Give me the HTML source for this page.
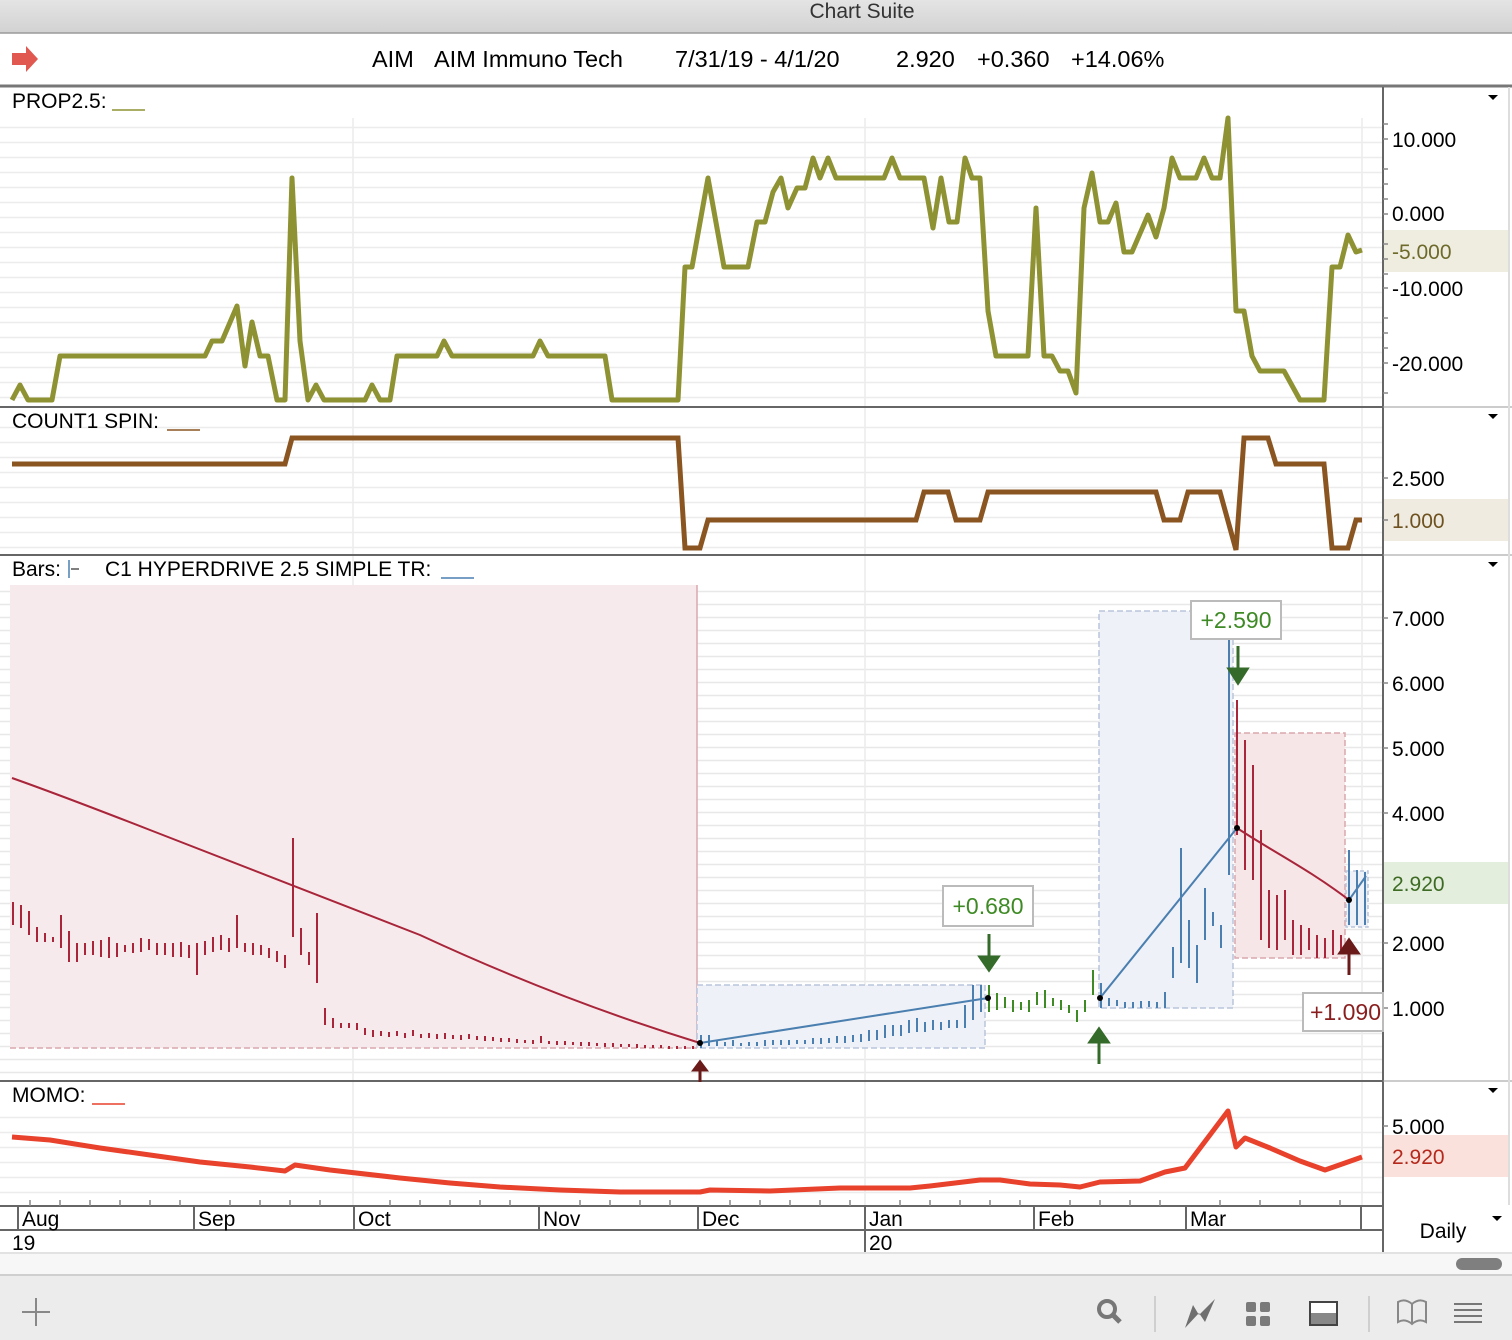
<!DOCTYPE html>
<html><head><meta charset="utf-8"><style>
body{margin:0;width:1512px;height:1340px;overflow:hidden;background:#fff;font-family:"Liberation Sans",sans-serif;}
svg{position:absolute;left:0;top:0}
text{font-family:"Liberation Sans",sans-serif}
</style></head><body>
<svg width="1512" height="1340" viewBox="0 0 1512 1340">
<defs>
<pattern id="hg" width="1512" height="15" patternUnits="userSpaceOnUse"><line x1="0" y1="7.5" x2="1512" y2="7.5" stroke="#ececec" stroke-width="1.5"/></pattern>
<pattern id="hg2" width="1512" height="13" patternUnits="userSpaceOnUse"><line x1="0" y1="6.5" x2="1512" y2="6.5" stroke="#e8e8e8" stroke-width="1.5"/></pattern>
<linearGradient id="tb" x1="0" y1="0" x2="0" y2="1"><stop offset="0" stop-color="#e4e4e4"/><stop offset="1" stop-color="#d2d2d2"/></linearGradient>
</defs>
<rect x="0" y="0" width="1512" height="33" fill="url(#tb)"/>
<line x1="0" y1="33" x2="1512" y2="33" stroke="#9a9a9a" stroke-width="1.5"/>
<text x="862" y="18" font-size="21" text-anchor="middle" fill="#333">Chart Suite</text>
<path d="M12 53 H26 V46 L38 59 L26 72 V65 H12 Z" fill="#e0584f"/>
<text y="67" font-size="23.5" fill="#000"><tspan x="372">AIM</tspan><tspan x="434">AIM Immuno Tech</tspan><tspan x="675">7/31/19 - 4/1/20</tspan><tspan x="896">2.920</tspan><tspan x="977">+0.360</tspan><tspan x="1071">+14.06%</tspan></text>
<line x1="0" y1="86" x2="1512" y2="86" stroke="#777" stroke-width="3"/>

<rect x="0" y="118" width="1383" height="288" fill="url(#hg)"/>
<rect x="0" y="425" width="1383" height="128" fill="url(#hg)"/>
<rect x="0" y="585" width="1383" height="494" fill="url(#hg2)"/>
<rect x="0" y="1110" width="1383" height="95" fill="url(#hg)"/>
<g stroke="#ececec" stroke-width="1.5">
<line x1="353" y1="118" x2="353" y2="1205"/><line x1="865" y1="118" x2="865" y2="1205"/><line x1="1362" y1="118" x2="1362" y2="1205"/>
</g>
<g stroke="#666" stroke-width="2">
<line x1="0" y1="407" x2="1383" y2="407"/><line x1="0" y1="555" x2="1383" y2="555"/><line x1="0" y1="1081" x2="1383" y2="1081"/>
<line x1="1383" y1="87" x2="1383" y2="1252"/>
</g>
<line x1="1383" y1="407" x2="1512" y2="407" stroke="#999"/><line x1="1383" y1="555" x2="1512" y2="555" stroke="#999"/><line x1="1383" y1="1081" x2="1512" y2="1081" stroke="#999"/>
<line x1="1509" y1="87" x2="1509" y2="1205" stroke="#ddd" stroke-width="2"/>

<text x="12" y="108" font-size="21">PROP2.5:</text><line x1="112" y1="110" x2="145" y2="110" stroke="#8e9232" stroke-width="1.5"/>
<text x="12" y="428" font-size="21">COUNT1 SPIN:</text><line x1="167" y1="430" x2="200" y2="430" stroke="#8a5520" stroke-width="1.5"/>
<text x="12" y="576" font-size="21">Bars:</text><line x1="69" y1="560" x2="69" y2="578" stroke="#4a7fb0" stroke-width="1.5"/><line x1="71" y1="569" x2="79" y2="569" stroke="#000"/>
<text x="105" y="576" font-size="21">C1 HYPERDRIVE 2.5 SIMPLE TR:</text><line x1="441" y1="578" x2="474" y2="578" stroke="#4a7fb0" stroke-width="1.5"/>
<text x="12" y="1102" font-size="21">MOMO:</text><line x1="92" y1="1104" x2="125" y2="1104" stroke="#e8412c" stroke-width="1.5"/>

<g fill="#000"><path d="M1488 95h10l-5 5z"/><path d="M1488 414h10l-5 5z"/><path d="M1488 562h10l-5 5z"/><path d="M1488 1088h10l-5 5z"/><path d="M1492 1216h10l-5 5z"/></g>
<rect x="1384" y="230" width="124" height="42" fill="#efede0"/>
<rect x="1384" y="499" width="124" height="42" fill="#f0ebe1"/>
<rect x="1384" y="862" width="124" height="42" fill="#e4eedd"/>
<rect x="1384" y="1135" width="124" height="42" fill="#fbe1dc"/>
<g font-size="21">
<text x="1392" y="147">10.000</text><text x="1392" y="221">0.000</text><text x="1392" y="259" fill="#6e6a2c">-5.000</text><text x="1392" y="296">-10.000</text><text x="1392" y="371">-20.000</text>
<text x="1392" y="486">2.500</text><text x="1392" y="528" fill="#6e5220">1.000</text>
<text x="1392" y="626">7.000</text><text x="1392" y="691">6.000</text><text x="1392" y="756">5.000</text><text x="1392" y="821">4.000</text><text x="1392" y="891" fill="#3d6b24">2.920</text><text x="1392" y="951">2.000</text><text x="1392" y="1016">1.000</text>
<text x="1392" y="1134">5.000</text><text x="1392" y="1164" fill="#b4291c">2.920</text>
</g>
<g stroke="#888" stroke-width="1.5">
<path d="M1383 124h5M1383 139h5M1383 169h5M1383 184h5M1383 199h5M1383 214h5M1383 244h5M1383 259h5M1383 274h5M1383 288h5M1383 318h5M1383 333h5M1383 348h5M1383 363h5M1383 393h5"/>
<path d="M1383 478h5M1383 520h5M1383 618h5M1383 683h5M1383 748h5M1383 813h5M1383 943h5M1383 1008h5M1383 1126h5"/>
</g>

<polyline fill="none" stroke="#8e9232" stroke-width="5" stroke-linejoin="round" points="12,400 20,385 28,400 52,400 60,356 205,356 212,341 222,341 237,306 245,366 252,322 260,356 268,356 277,400 285,400 292,178 300,341 308,400 316,385 324,400 365,400 372,385 380,400 390,400 397,356 437,356 444,341 452,356 533,356 540,341 548,356 605,356 612,400 678,400 685,267 692,267 708,178 724,267 748,267 757,222 765,222 773,192 781,178 788,208 797,188 805,188 813,158 820,178 828,158 836,178 884,178 892,158 900,178 924,178 933,228 941,178 949,222 957,222 965,158 972,178 980,178 988,311 996,356 1028,356 1036,208 1044,356 1052,356 1060,371 1068,371 1076,393 1084,208 1092,173 1100,222 1108,222 1116,203 1124,252 1132,252 1148,215 1156,237 1164,208 1172,158 1180,178 1196,178 1204,158 1212,178 1220,178 1228,118 1236,311 1244,311 1252,356 1260,371 1284,371 1300,400 1324,400 1332,267 1340,267 1348,235 1356,252 1362,250"/>
<polyline fill="none" stroke="#8a5520" stroke-width="5" points="12,464 285,464 292,438 678,438 685,548 700,548 708,520 916,520 924,492 948,492 956,520 980,520 988,492 1156,492 1164,520 1180,520 1188,492 1220,492 1236,550 1244,438 1268,438 1276,464 1324,464 1332,548 1348,548 1356,520 1362,520"/>

<rect x="10" y="585" width="687" height="463" fill="#f7eaec"/>
<line x1="697" y1="585" x2="697" y2="1048" stroke="#d9a8ad" stroke-width="1.5"/>
<line x1="10" y1="1048" x2="697" y2="1048" stroke="#d9a8ad" stroke-width="1.5" stroke-dasharray="6,3"/>
<rect x="697" y="985" width="288" height="63" fill="#eef1f7" stroke="#b9c6dc" stroke-width="1.5" stroke-dasharray="6,3"/>
<rect x="1099" y="611" width="134" height="397" fill="#eef1f7" stroke="#b9c6dc" stroke-width="1.5" stroke-dasharray="6,3"/>
<rect x="1235" y="733" width="110" height="225" fill="#f6e6e8" stroke="#d9a8ad" stroke-width="1.5" stroke-dasharray="6,3"/>
<rect x="1346" y="871" width="22" height="56" fill="#eef1f7" stroke="#b9c6dc" stroke-width="1.5" stroke-dasharray="4,3"/>

<path fill="none" stroke="#a8253a" stroke-width="2" d="M13 902V925M21 905V928M29 911V935M37 927V942M45 933V942M53 937V942M61 915V948M69 931V962M77 943V962M85 943V955M93 941V955M101 940V957M109 937V958M117 943V957M125 945V952M133 943V953M141 938V952M149 939V950M157 943V955M165 943V955M173 943V957M181 942V957M189 945V958M197 943V975M205 941V955M213 937V952M221 935V950M229 938V952M237 915V948M245 943V952M253 943V955M261 945V955M269 948V958M277 951V962M285 955V968M293 838V937M301 928V955M309 952V965M317 913V983M325 1008V1025M333 1018V1028M341 1023V1028M349 1023V1028M357 1023V1030M365 1028V1035M373 1030V1037M381 1031V1036M389 1032V1037M397 1031V1036M405 1033V1038M413 1030V1036M421 1034V1038M429 1033V1038M437 1034V1039M445 1033V1039M453 1035V1039M461 1035V1040M469 1034V1039M477 1036V1040M485 1036V1041M493 1037V1041M501 1038V1042M509 1038V1042M517 1039V1043M525 1040V1043M533 1040V1044M541 1036V1043M549 1041V1044M557 1041V1045M565 1041V1045M573 1042V1045M581 1042V1046M589 1042V1046M597 1043V1046M605 1043V1047M613 1043V1047M621 1044V1047M629 1044V1047M637 1044V1048M645 1045V1048M653 1045V1048M661 1045V1048M669 1046V1049M677 1046V1049M685 1046V1049M693 1046V1049"/>
<path fill="none" stroke="#a8253a" stroke-width="2" d="M1237 700V835M1245 740V870M1253 765V880M1261 830V940M1269 890V948M1277 895V950M1285 890V940M1293 920V955M1301 925V955M1309 928V950M1317 935V958M1325 938V958M1333 930V955M1341 935V950"/>
<path fill="none" stroke="#a8253a" stroke-width="2" d="M12 778 Q60 795 150 830 T420 935 Q560 1000 700 1043"/>
<path fill="none" stroke="#a8253a" stroke-width="2" d="M1237 828 C1270 850 1310 870 1349 900"/>
<path fill="none" stroke="#4a7fb0" stroke-width="2" d="M701 1035V1048M709 1035V1046M717 1040V1046M725 1042V1046M733 1040V1046M741 1043V1046M749 1042V1046M757 1042V1046M765 1040V1046M773 1040V1045M781 1040V1045M789 1040V1045M797 1040V1044M805 1040V1044M813 1038V1044M821 1038V1044M829 1038V1043M837 1036V1043M845 1036V1043M853 1035V1042M861 1034V1042M869 1030V1041M877 1030V1040M885 1025V1038M893 1025V1036M901 1025V1036M909 1020V1033M917 1018V1032M925 1022V1032M933 1020V1030M941 1022V1030M949 1020V1028M957 1020V1028M965 1005V1028M973 985V1020M981 985V1012"/>
<path fill="none" stroke="#4a7fb0" stroke-width="2" d="M1101 983V1008M1109 998V1006M1117 1000V1006M1125 1002V1008M1133 1002V1008M1141 1001V1008M1149 1001V1007M1157 1002V1008M1165 992V1008M1173 947V978M1181 848V963M1189 920V968M1197 945V983M1205 888V940M1213 912V926M1221 925V948M1229 640V875M1349 850V925M1357 870V925M1365 872V925"/>
<path fill="none" stroke="#4a7fb0" stroke-width="2" d="M700 1043 C780 1030 880 1015 988 998"/>
<path fill="none" stroke="#4a7fb0" stroke-width="2" d="M1100 998 L1237 828 M1349 900 L1366 876"/>
<path fill="none" stroke="#3e8a25" stroke-width="2" d="M989 985V1012M997 993V1010M1005 997V1008M1013 1000V1012M1021 1002V1010M1029 1000V1012M1037 992V1005M1045 990V1008M1053 998V1006M1061 1000V1010M1069 1005V1013M1077 1010V1022M1085 1000V1012M1093 970V995"/>
<g fill="#000"><circle cx="700" cy="1043" r="3"/><circle cx="988" cy="998" r="3"/><circle cx="1100" cy="998" r="3"/><circle cx="1237" cy="828" r="3"/><circle cx="1349" cy="900" r="3"/></g>
<path d="M700 1082V1068 M694 1070 L700 1062 L706 1070Z" stroke="#6b1a1a" stroke-width="3" fill="#6b1a1a"/>
<path d="M989 934V958 M980 957 L989 970 L998 957Z" stroke="#356b2a" stroke-width="3" fill="#356b2a"/>
<path d="M1099 1064V1040 M1090 1042 L1099 1029 L1108 1042Z" stroke="#356b2a" stroke-width="3" fill="#356b2a"/>
<path d="M1238 646V670 M1229 669 L1238 683 L1247 669Z" stroke="#356b2a" stroke-width="3" fill="#356b2a"/>
<path d="M1349 975V950 M1340 953 L1349 940 L1358 953Z" stroke="#6b1a1a" stroke-width="3" fill="#6b1a1a"/>
<rect x="943" y="886" width="90" height="40" fill="#fff" stroke="#bbb" stroke-width="2"/><text x="988" y="914" font-size="23" fill="#3e8a25" text-anchor="middle">+0.680</text>
<rect x="1191" y="601" width="90" height="38" fill="#fff" stroke="#bbb" stroke-width="2"/><text x="1236" y="628" font-size="23" fill="#3e8a25" text-anchor="middle">+2.590</text>
<rect x="1303" y="993" width="80" height="38" fill="#fff" stroke="#bbb" stroke-width="2"/><text x="1310" y="1020" font-size="23" fill="#8a1e1e">+1.090</text>

<polyline fill="none" stroke="#e8412c" stroke-width="5" stroke-linejoin="round" points="12,1137 50,1140 100,1148 150,1155 200,1162 250,1167 285,1171 295,1165 330,1170 400,1178 450,1183 500,1187 560,1190 620,1192 700,1192 710,1190 770,1191 840,1188 910,1188 930,1186 980,1180 1000,1180 1030,1184 1060,1185 1080,1187 1100,1182 1140,1181 1165,1172 1185,1168 1228,1111 1236,1147 1245,1138 1270,1148 1300,1161 1325,1170 1345,1163 1362,1157"/>

<line x1="0" y1="1206" x2="1383" y2="1206" stroke="#666" stroke-width="2"/>
<path stroke="#888" stroke-width="1.5" d="M30 1200v6M60 1200v6M90 1200v6M120 1200v6M150 1200v6M180 1200v6M230 1200v6M260 1200v6M290 1200v6M320 1200v6M390 1200v6M420 1200v6M450 1200v6M480 1200v6M510 1200v6M580 1200v6M610 1200v6M640 1200v6M670 1200v6M730 1200v6M760 1200v6M790 1200v6M820 1200v6M850 1200v6M900 1200v6M930 1200v6M960 1200v6M990 1200v6M1020 1200v6M1070 1200v6M1100 1200v6M1130 1200v6M1160 1200v6M1220 1200v6M1260 1200v6M1300 1200v6M1340 1200v6"/>
<g stroke="#666" stroke-width="2"><path d="M18 1206V1230M194 1206V1230M354 1206V1230M539 1206V1230M698 1206V1230M865 1206V1252M1034 1206V1230M1186 1206V1230M1361 1206V1230"/><line x1="0" y1="1230" x2="1383" y2="1230"/></g>
<g font-size="21"><text x="22" y="1226">Aug</text><text x="198" y="1226">Sep</text><text x="358" y="1226">Oct</text><text x="543" y="1226">Nov</text><text x="702" y="1226">Dec</text><text x="869" y="1226">Jan</text><text x="1038" y="1226">Feb</text><text x="1190" y="1226">Mar</text><text x="12" y="1250">19</text><text x="869" y="1250">20</text>
<text x="1443" y="1238" text-anchor="middle">Daily</text></g>
<rect x="0" y="1253" width="1512" height="22" fill="#f7f7f7"/><line x1="0" y1="1253" x2="1512" y2="1253" stroke="#e2e2e2" stroke-width="2"/>
<rect x="1456" y="1258" width="46" height="12" rx="6" fill="#7f7f7f"/>
<rect x="0" y="1275" width="1512" height="65" fill="#ececec"/><line x1="0" y1="1275" x2="1512" y2="1275" stroke="#cfcfcf" stroke-width="2"/>
<path d="M36 1298V1326M22 1312H50" stroke="#888" stroke-width="2"/>
<circle cx="1107" cy="1309" r="8" fill="none" stroke="#777" stroke-width="4"/><path d="M1113 1315l7 7" stroke="#777" stroke-width="5"/>
<path d="M1155 1296V1332M1369 1296V1332" stroke="#cfcfcf" stroke-width="2"/>
<path d="M1185 1328L1193 1305L1199 1315L1215 1299L1205 1322L1199 1313Z" fill="#6f6f6f"/>
<g fill="#7a7a7a"><rect x="1246" y="1302" width="10" height="10" rx="2"/><rect x="1260" y="1302" width="10" height="10" rx="2"/><rect x="1246" y="1316" width="10" height="10" rx="2"/><rect x="1260" y="1316" width="10" height="10" rx="2"/></g>
<rect x="1310" y="1302" width="27" height="23" fill="#fff" stroke="#444" stroke-width="2"/><rect x="1311" y="1313" width="25" height="11" fill="#888"/>
<path d="M1398 1322V1302Q1405 1298 1412 1304Q1419 1298 1426 1302V1322Q1419 1318 1412 1324Q1405 1318 1398 1322ZM1412 1304V1324" fill="none" stroke="#888" stroke-width="2"/>
<path d="M1454 1304H1482M1454 1310H1482M1454 1316H1482M1454 1322H1482" stroke="#777" stroke-width="2"/>
</svg>
</body></html>
